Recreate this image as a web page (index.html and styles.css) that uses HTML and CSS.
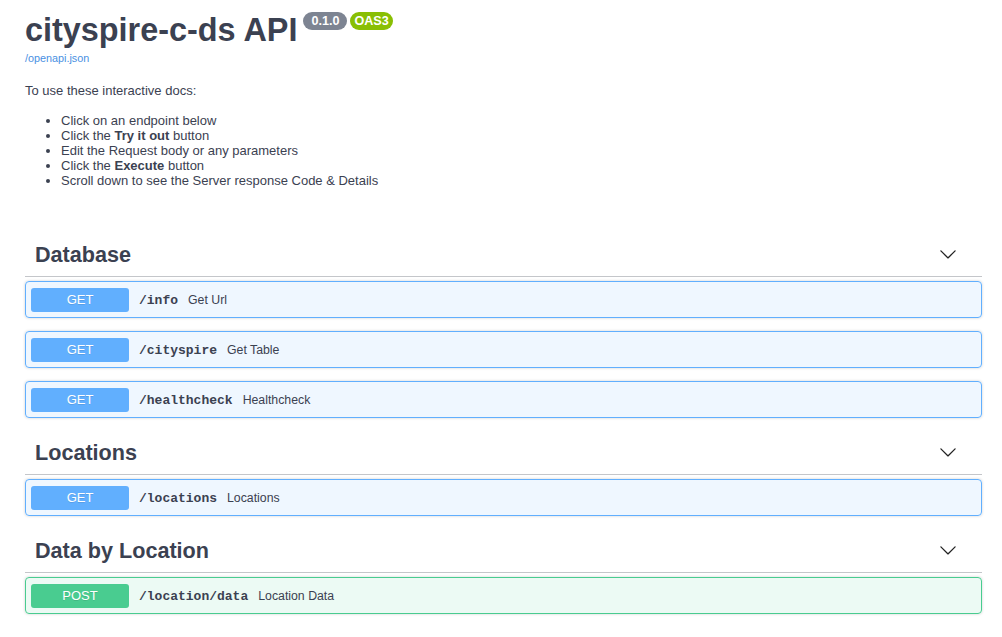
FILE: index.html
```html
<!DOCTYPE html>
<html lang="en">
<head>
<meta charset="utf-8">
<title>cityspire-c-ds API - Swagger UI</title>
<link rel="stylesheet" href="styles.css">
</head>
<body>
<div class="wrapper">
  <div class="info">
    <h2 class="title">cityspire-c-ds API<span class="badge badge-version">0.1.0</span><span class="badge badge-oas">OAS3</span></h2>
    <a class="spec-link" href="#">/openapi.json</a>
    <div class="description">
      <p>To use these interactive docs:</p>
      <ul>
        <li>Click on an endpoint below</li>
        <li>Click the <strong>Try it out</strong> button</li>
        <li>Edit the Request body or any parameters</li>
        <li>Click the <strong>Execute</strong> button</li>
        <li>Scroll down to see the Server response Code &amp; Details</li>
      </ul>
    </div>
  </div>

  <section class="tag-section">
    <h4 class="tag-header"><span>Database</span>
      <svg class="arrow" width="18" height="18" viewBox="0 0 20 20"><path d="M17.418 6.109c.272-.268.709-.268.979 0s.271.701 0 .969l-7.908 7.83c-.27.268-.707.268-.979 0l-7.908-7.830c-.27-.268-.27-.701 0-.969.271-.268.709-.268.979 0L10 13.25l7.418-7.141z"/></svg>
    </h4>
    <div class="opblock get"><span class="method">GET</span><span class="path">/info</span><span class="summary">Get Url</span></div>
    <div class="opblock get"><span class="method">GET</span><span class="path">/cityspire</span><span class="summary">Get Table</span></div>
    <div class="opblock get"><span class="method">GET</span><span class="path">/healthcheck</span><span class="summary">Healthcheck</span></div>
  </section>

  <section class="tag-section">
    <h4 class="tag-header"><span>Locations</span>
      <svg class="arrow" width="18" height="18" viewBox="0 0 20 20"><path d="M17.418 6.109c.272-.268.709-.268.979 0s.271.701 0 .969l-7.908 7.83c-.27.268-.707.268-.979 0l-7.908-7.83c-.27-.268-.27-.701 0-.969.271-.268.709-.268.979 0L10 13.25l7.418-7.141z"/></svg>
    </h4>
    <div class="opblock get"><span class="method">GET</span><span class="path">/locations</span><span class="summary">Locations</span></div>
  </section>

  <section class="tag-section">
    <h4 class="tag-header"><span>Data by Location</span>
      <svg class="arrow" width="18" height="18" viewBox="0 0 20 20"><path d="M17.418 6.109c.272-.268.709-.268.979 0s.271.701 0 .969l-7.908 7.83c-.27.268-.707.268-.979 0l-7.908-7.83c-.27-.268-.27-.701 0-.969.271-.268.709-.268.979 0L10 13.25l7.418-7.141z"/></svg>
    </h4>
    <div class="opblock post"><span class="method">POST</span><span class="path">/location/data</span><span class="summary">Location Data</span></div>
  </section>
</div>
</body>
</html>
```

FILE: styles.css
```css
* { box-sizing: border-box; }

html, body {
  margin: 0;
  padding: 0;
  background: #fff;
}

body {
  font-family: "Liberation Sans", Arial, sans-serif;
  color: #3b4151;
}

.wrapper {
  padding: 11px 20px 0 25px;
}

.title {
  display: flex;
  align-items: flex-start;
  margin: 0;
  height: 38px;
  font-size: 32.4px;
  line-height: 38px;
  font-weight: 700;
  color: #3b4151;
}

.badge {
  display: inline-block;
  margin-top: 1px;
  height: 18px;
  border-radius: 9px;
  font-size: 12.6px;
  line-height: 18px;
  font-weight: 700;
  color: #fff;
}

.badge-version {
  margin-left: 6px;
  padding: 0 8px;
  background: #7d8492;
}

.badge-oas {
  margin-left: 3px;
  padding: 0 4px;
  background: #89bf04;
}

.spec-link {
  display: block;
  margin-top: 2px;
  font-size: 10.8px;
  line-height: 14px;
  color: #4990e2;
  text-decoration: none;
}

.description {
  font-size: 13px;
  margin-bottom: 45px;
}

.description p {
  margin: 17px 0 0;
  line-height: 18px;
}

.description ul {
  margin: 13px 0 0;
  padding-left: 36px;
}

.description li {
  line-height: 15px;
}

.description strong {
  font-weight: 700;
}

.tag-header {
  display: flex;
  align-items: center;
  justify-content: space-between;
  margin: 0 0 4px;
  height: 44px;
  padding: 0 25px 0 10px;
  border-bottom: 1px solid rgba(59, 65, 81, 0.3);
  font-size: 21.6px;
  font-weight: 700;
  color: #3b4151;
}

.arrow {
  display: block;
  fill: #222;
  margin-top: -1px;
}

.opblock {
  display: flex;
  align-items: center;
  height: 37px;
  margin-bottom: 13px;
  padding: 0 5px;
  border: 1px solid;
  border-radius: 4px;
  box-shadow: 0 0 3px rgba(0, 0, 0, 0.19);
}

.opblock.get {
  border-color: #61affe;
  background: rgba(97, 175, 254, 0.1);
}

.opblock.post {
  border-color: #49cc90;
  background: rgba(73, 204, 144, 0.1);
}

.method {
  display: block;
  width: 98px;
  height: 24px;
  border-radius: 3px;
  text-align: center;
  font-size: 13px;
  line-height: 24px;
  font-weight: 400;
  color: #fff;
  text-shadow: 0 1px 0 rgba(0, 0, 0, 0.1);
}

.get .method { background: #61affe; }
.post .method { background: #49cc90; }

.path {
  padding: 0 10px;
  margin-top: 2px;
  font-family: "Liberation Mono", "Courier New", monospace;
  font-size: 13px;
  font-weight: 700;
  color: #3b4151;
}

.summary {
  font-size: 12.3px;
  color: #3b4151;
}
```
